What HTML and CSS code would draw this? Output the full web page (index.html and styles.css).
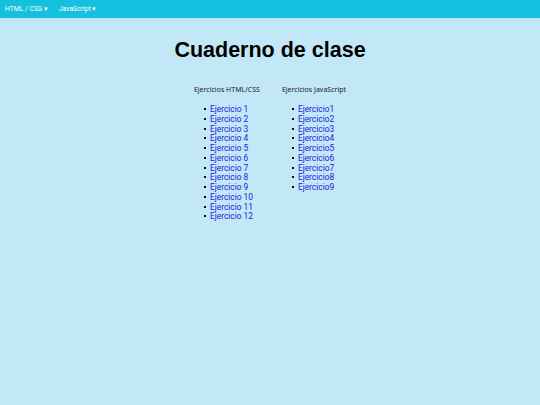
FILE: index.html
```html
<!DOCTYPE html>
<html lang="es">
<head>
<meta charset="utf-8">
<title>Cuaderno de clase</title>
<link rel="stylesheet" href="styles.css">
</head>
<body>
<nav class="navbar">
  <span class="nav-item">HTML / CSS <span class="caret">▾</span></span>
  <span class="nav-item">JavaScript <span class="caret">▾</span></span>
</nav>
<main class="content">
  <h1 class="title">Cuaderno de clase</h1>
  <div class="columns">
    <section class="column">
      <h2 class="col-title">Ejercicios HTML/CSS</h2>
      <ul class="list">
        <li><a href="#">Ejercicio 1</a></li>
        <li><a href="#">Ejercicio 2</a></li>
        <li><a href="#">Ejercicio 3</a></li>
        <li><a href="#">Ejercicio 4</a></li>
        <li><a href="#">Ejercicio 5</a></li>
        <li><a href="#">Ejercicio 6</a></li>
        <li><a href="#">Ejercicio 7</a></li>
        <li><a href="#">Ejercicio 8</a></li>
        <li><a href="#">Ejercicio 9</a></li>
        <li><a href="#">Ejercicio 10</a></li>
        <li><a href="#">Ejercicio 11</a></li>
        <li><a href="#">Ejercicio 12</a></li>
      </ul>
    </section>
    <section class="column">
      <h2 class="col-title">Ejercicios JavaScript</h2>
      <ul class="list">
        <li><a href="#">Ejercicio1</a></li>
        <li><a href="#">Ejercicio2</a></li>
        <li><a href="#">Ejercicio3</a></li>
        <li><a href="#">Ejercicio4</a></li>
        <li><a href="#">Ejercicio5</a></li>
        <li><a href="#">Ejercicio6</a></li>
        <li><a href="#">Ejercicio7</a></li>
        <li><a href="#">Ejercicio8</a></li>
        <li><a href="#">Ejercicio9</a></li>
      </ul>
    </section>
  </div>
</main>
</body>
</html>
```
FILE: styles.css
```css
html, body {
  margin: 0;
  padding: 0;
}
body {
  background: #c2e8f7;
  min-height: 405px;
  font-family: Roboto, "Liberation Sans", sans-serif;
}
.navbar {
  height: 18px;
  background: #14c0dd;
  display: flex;
  align-items: center;
  gap: 11px;
  padding: 0 5px;
}
.nav-item {
  color: #ffffff;
  font-size: 6.8px;
}
.caret {
  font-size: 6.5px;
}
.content {
  display: flex;
  flex-direction: column;
  align-items: center;
}
.title {
  font-family: "Liberation Sans", Arial, sans-serif;
  font-weight: bold;
  font-size: 21.5px;
  margin: 20px 0 0;
  color: #000;
}
.columns {
  display: flex;
  gap: 22px;
  margin-top: 22px;
}
.col-title {
  font-family: "Noto Sans", sans-serif;
  font-weight: normal;
  font-size: 7px;
  margin: 0;
  color: #1a1a1a;
}
.list {
  list-style: none;
  margin: 11px 0 0;
  padding-left: 16px;
  font-size: 8.4px;
  line-height: 9.75px;
}
.list li::before {
  content: "";
  display: inline-block;
  width: 2px;
  height: 2px;
  background: #111;
  margin-left: -6px;
  margin-right: 4px;
  vertical-align: 2px;
}
.list a {
  color: #1a1adf;
  text-decoration: none;
}
```
